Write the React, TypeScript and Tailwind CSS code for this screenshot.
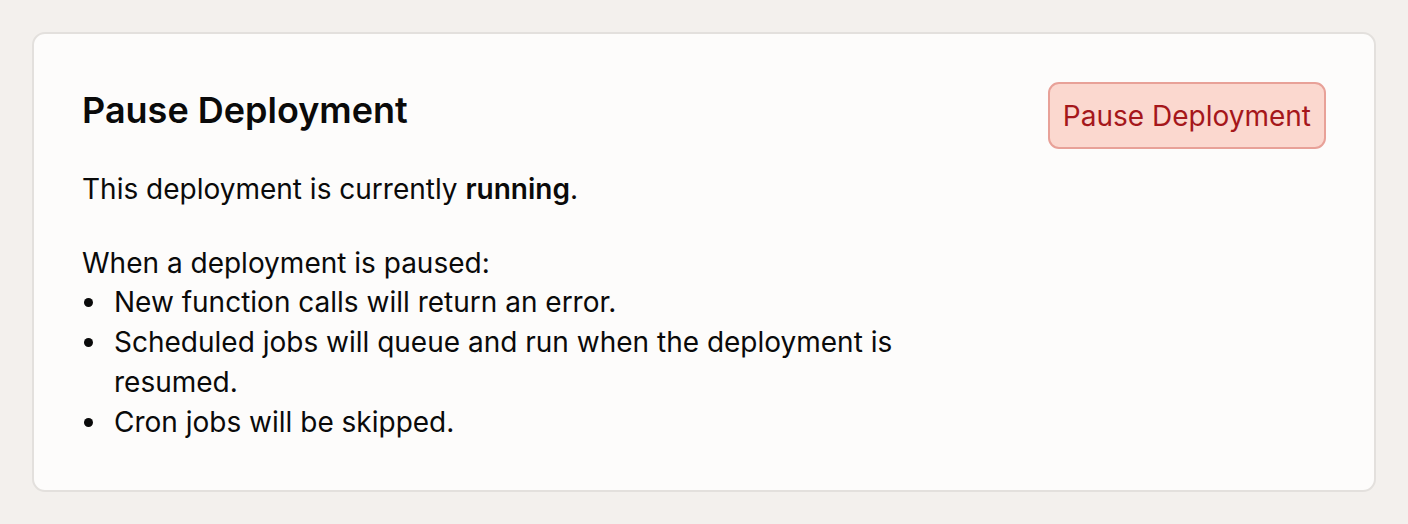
import React from 'react'

const effects = [
    'New function calls will return an error.',
    'Scheduled jobs will queue and run when the deployment is resumed.',
    'Cron jobs will be skipped.',
]

function PauseDeploymentCard() {
    return (
        <div className="flex justify-between gap-10 rounded-[13px] border-2 border-[#e3e0dd] bg-[#fdfcfb] px-[48px] pt-[48px] pb-[48px]">
            <div className="flex max-w-[896px] flex-col">
                <h2 className="text-[36px] leading-[56px] font-semibold">Pause Deployment</h2>
                <p className="mt-[30.5px] text-[28px] leading-[40px]">
                    This deployment is currently <span className="font-semibold">running</span>.
                </p>
                <div className="mt-[34px] text-[28px] leading-[40px]">
                    <p className="-mb-[1px]">When a deployment is paused:</p>
                    <ul className="list-disc pl-[27px]">
                        {effects.map((effect) => (
                            <li key={effect} className="pl-[5px]">{effect}</li>
                        ))}
                    </ul>
                </div>
            </div>
            <div>
                <button
                    type="button"
                    className="h-[67px] whitespace-nowrap rounded-[11px] border-2 border-[#e8a198] bg-[#fbd8cf] px-[13px] text-[28px] text-[#a5171b] hover:bg-[#f8c9bd]"
                >
                    Pause Deployment
                </button>
            </div>
        </div>
    )
}

export default function App() {
    return (
        <div className="min-h-[524px] bg-[#f3f0ed] p-[32px] font-['Inter',sans-serif] text-[#0a0a0a]">
            <PauseDeploymentCard />
        </div>
    )
}
